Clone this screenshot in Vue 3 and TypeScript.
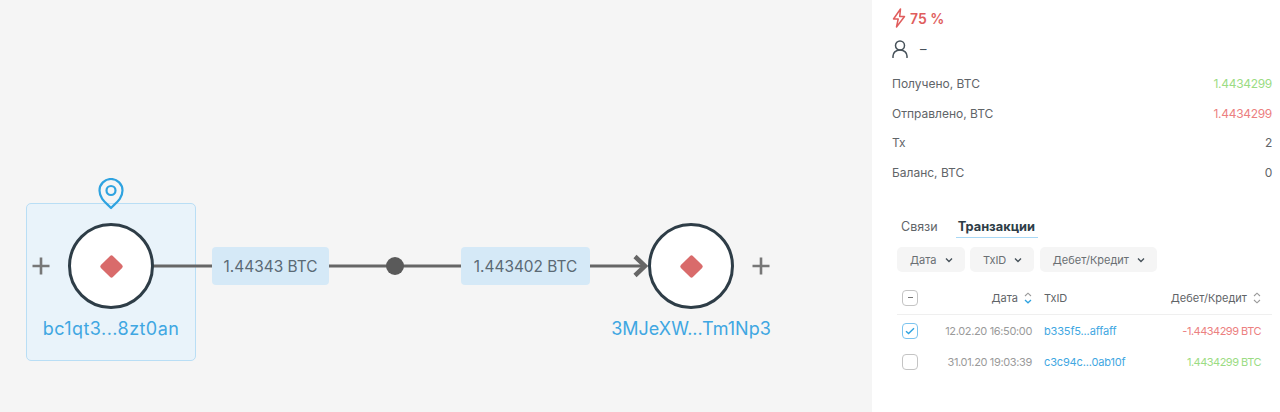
<script setup lang="ts">
interface Tx {
  date: string
  id: string
  amount: string
  kind: 'in' | 'out'
  checked: boolean
}

const stats = [
  { label: 'Получено, BTC', value: '1.4434299', cls: 'green' },
  { label: 'Отправлено, BTC', value: '1.4434299', cls: 'red' },
  { label: 'Tx', value: '2', cls: '' },
  { label: 'Баланс, BTC', value: '0', cls: '' }
]

const filters = ['Дата', 'TxID', 'Дебет/Кредит']

const rows: Tx[] = [
  { date: '12.02.20 16:50:00', id: 'b335f5...affaff', amount: '-1.4434299 BTC', kind: 'out', checked: true },
  { date: '31.01.20 19:03:39', id: 'c3c94c...0ab10f', amount: '1.4434299 BTC', kind: 'in', checked: false }
]
</script>

<template>
  <div class="page">
    <div class="canvas">
      <svg class="edges" width="872" height="412" viewBox="0 0 872 412">
        <line x1="150" y1="266" x2="212" y2="266" />
        <line x1="329" y1="266" x2="461" y2="266" />
        <line x1="590" y1="266" x2="646" y2="266" />
        <polyline points="635,256.500 645,266 635,275.500" class="arrow" />
        <circle cx="395" cy="266" r="9" />
        <path d="M32.500 266h17M41 257.500v17M752.500 266h17M761 257.500v17" class="plus" />
      </svg>

      <div class="selection"></div>

      <svg class="pin" width="26" height="32" viewBox="0 0 26 32" fill="none">
        <path d="M13 30C9 25.500 1.500 21 1.500 12.500a11.500 11.500 0 0 1 23 0C24.500 21 17 25.500 13 30Z" stroke="#2fa3e0" stroke-width="2.200" stroke-linejoin="round" />
        <circle cx="13" cy="12.500" r="4.500" stroke="#2fa3e0" stroke-width="2.200" />
      </svg>

      <div class="node node-a"><span class="diamond"></span></div>
      <div class="node node-b"><span class="diamond"></span></div>

      <div class="amount amount-a">1.44343 BTC</div>
      <div class="amount amount-b">1.443402 BTC</div>

      <div class="address address-a">bc1qt3...8zt0an</div>
      <div class="address address-b">3MJeXW...Tm1Np3</div>
    </div>

    <aside class="panel">
      <div class="risk">
        <svg width="14" height="20" viewBox="0 0 14 20" fill="none">
          <path d="M8.500 1 1.500 11h4.700L4.500 19l8-10.500H7.700L8.500 1Z" stroke="#e05d5d" stroke-width="1.500" stroke-linejoin="round" />
        </svg>
        <span>75 %</span>
      </div>
      <div class="owner">
        <svg width="16" height="18" viewBox="0 0 16 18" fill="none">
          <circle cx="8" cy="5.500" r="4.500" stroke="#47525a" stroke-width="1.500" />
          <path d="M1 17.500v-1.500c0-3 2.500-6 7-6s7 3 7 6v1.500" stroke="#47525a" stroke-width="1.500" stroke-linecap="round" />
        </svg>
        <span>–</span>
      </div>

      <div class="stats">
        <div v-for="s in stats" :key="s.label" class="stat">
          <span>{{ s.label }}</span>
          <span class="num" :class="s.cls">{{ s.value }}</span>
        </div>
      </div>

      <div class="tabs">
        <span class="tab">Связи</span>
        <span class="tab active">Транзакции</span>
      </div>

      <div class="filters">
        <button v-for="f in filters" :key="f" class="filter">
          {{ f }}
          <svg width="8" height="6" viewBox="0 0 8 6" fill="none">
            <path d="M1 1.500 4 4.500 7 1.500" stroke="#47525a" stroke-width="1.400" />
          </svg>
        </button>
      </div>

      <div class="table">
        <div class="row head">
          <span class="box minus"><i></i></span>
          <span class="date">Дата
            <svg class="sort" width="8" height="12" viewBox="0 0 8 12" fill="none">
              <path d="M1 4 4 1.200 7 4" stroke="#9a9a9a" stroke-width="1.100" />
              <path d="M1 8 4 10.800 7 8" stroke="#2fa3e0" stroke-width="1.300" />
            </svg>
          </span>
          <span class="txid">TxID</span>
          <span class="debit">Дебет/Кредит
            <svg class="sort" width="8" height="12" viewBox="0 0 8 12" fill="none">
              <path d="M1 4 4 1.200 7 4" stroke="#9a9a9a" stroke-width="1.100" />
              <path d="M1 8 4 10.800 7 8" stroke="#9a9a9a" stroke-width="1.100" />
            </svg>
          </span>
        </div>
        <div v-for="r in rows" :key="r.id" class="row body">
          <span class="box" :class="{ checked: r.checked }">
            <svg v-if="r.checked" width="10" height="8" viewBox="0 0 10 8" fill="none">
              <path d="M1 4.200 3.600 6.500 9 1.200" stroke="#2fa3e0" stroke-width="1.400" />
            </svg>
          </span>
          <span class="date muted">{{ r.date }}</span>
          <span class="txid link">{{ r.id }}</span>
          <span class="debit tight" :class="r.kind === 'in' ? 'green' : 'red'">{{ r.amount }}</span>
        </div>
      </div>
    </aside>
  </div>
</template>

<style>
html,
body {
  margin: 0;
  background: #fff;
}
</style>

<style scoped>
.page {
  display: flex;
  width: 1280px;
  height: 412px;
  overflow: hidden;
  font-family: Inter, "Noto Sans", sans-serif;
  color: #5f6468;
}

/* graph */
.canvas {
  position: relative;
  flex: 0 0 872px;
  background: #f5f5f5;
}
.edges {
  position: absolute;
  left: 0;
  top: 0;
  z-index: 1;
}
.edges line {
  stroke: #666;
  stroke-width: 3;
}
.edges circle {
  fill: #5a5a5a;
}
.arrow {
  fill: none;
  stroke: #666;
  stroke-width: 4.500;
}
.plus {
  fill: none;
  stroke: #777;
  stroke-width: 2.600;
}
.selection {
  position: absolute;
  left: 26px;
  top: 203px;
  width: 168px;
  height: 156px;
  background: #e9f3fa;
  border: 1px solid #b9def5;
  border-radius: 5px;
}
.pin {
  position: absolute;
  left: 98px;
  top: 178px;
  z-index: 2;
}
.node {
  position: absolute;
  top: 223px;
  width: 80px;
  height: 80px;
  display: flex;
  align-items: center;
  justify-content: center;
  background: #fff;
  border: 3px solid #2e3d47;
  border-radius: 50%;
  z-index: 2;
}
.node-a {
  left: 68px;
}
.node-b {
  left: 648px;
}
.diamond {
  width: 17px;
  height: 17px;
  background: #d96b6b;
  border-radius: 2px;
  transform: rotate(45deg);
}
.amount {
  position: absolute;
  top: 247px;
  height: 38px;
  display: flex;
  align-items: center;
  justify-content: center;
  background: #d5e9f7;
  border-radius: 4px;
  color: #5b6a75;
  font-size: 15.400px;
  z-index: 2;
}
.amount-a {
  left: 212px;
  width: 117px;
}
.amount-b {
  left: 461px;
  width: 129px;
}
.address {
  position: absolute;
  top: 318px;
  line-height: 22px;
  color: #3fa7e2;
  font-size: 18px;
  white-space: nowrap;
  transform: translateX(-50%);
  z-index: 2;
}
.address-a {
  left: 111px;
  letter-spacing: 0.450px;
}
.address-b {
  left: 691px;
}

/* side panel */
.panel {
  flex: 1;
  min-width: 0;
  box-sizing: border-box;
  padding: 8px 8px 0 20px;
  background: #fff;
  font-size: 12px;
}
.risk {
  display: flex;
  align-items: center;
  gap: 4px;
  height: 20px;
  color: #e05d5d;
  font-size: 14px;
  font-weight: 600;
}
.owner {
  display: flex;
  align-items: center;
  gap: 12px;
  height: 24px;
  margin-top: 9px;
  color: #47525a;
  font-size: 13px;
}
.stats {
  margin-top: 8px;
}
.stat {
  display: flex;
  justify-content: space-between;
  align-items: center;
  height: 29.600px;
}
.num {
  letter-spacing: -0.300px;
}
.green {
  color: #9bdc83;
}
.red {
  color: #ec8080;
}
.tabs {
  display: flex;
  gap: 15px;
  height: 30px;
  margin-top: 21px;
  margin-left: 6px;
}
.tab {
  box-sizing: border-box;
  height: 30px;
  padding: 11px 3px 0;
  font-size: 12.500px;
}
.tab.active {
  padding-left: 2px;
  color: #2e3d47;
  font-size: 12.800px;
  font-weight: 700;
  border-bottom: 1.500px solid #a9d8f5;
}
.filters {
  display: flex;
  gap: 5.500px;
  margin-top: 9px;
  margin-left: 5px;
}
.filter {
  display: flex;
  align-items: center;
  gap: 8px;
  height: 25px;
  padding: 0 12px 0 13px;
  border: 0;
  border-radius: 5px;
  background: #f5f5f5;
  color: #6a6f73;
  font: inherit;
  font-size: 11px;
}
.table {
  margin-top: 9px;
  margin-left: 5px;
  font-size: 11px;
}
.row {
  display: grid;
  grid-template-columns: 23px 107px 12px 1fr;
  align-items: center;
  padding: 0 11px 0 5px;
}
.row.head {
  height: 33px;
  border-bottom: 1px solid #efefef;
}
.row.body {
  height: 31px;
}
.box {
  box-sizing: border-box;
  display: flex;
  align-items: center;
  justify-content: center;
  width: 16px;
  height: 16px;
  border: 1.500px solid #c4c4c4;
  border-radius: 4px;
}
.box.checked {
  border-color: #7cc4ef;
}
.minus i {
  display: block;
  width: 5px;
  height: 1px;
  background: #777;
}
.date {
  display: flex;
  align-items: center;
  justify-content: flex-end;
  gap: 6px;
  white-space: nowrap;
}
.muted {
  color: #9a9a9a;
  letter-spacing: -0.350px;
}
.txid {
  grid-column: 4;
  grid-row: 1;
  white-space: nowrap;
}
.link {
  color: #3fa7e2;
  letter-spacing: -0.150px;
}
.debit {
  grid-column: 4;
  grid-row: 1;
  display: flex;
  align-items: center;
  justify-content: flex-end;
  gap: 6px;
  white-space: nowrap;
}
.tight {
  letter-spacing: -0.500px;
}
.sort {
  flex: none;
}
</style>
